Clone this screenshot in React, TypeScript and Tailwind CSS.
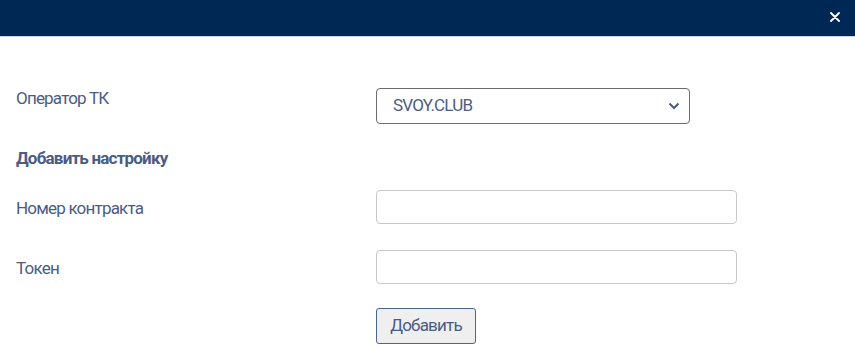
import React from "react";

export default function App() {
  const font = { fontFamily: "Roboto, 'Noto Sans', sans-serif" };
  return (
    <div className="w-[855px] h-[347px] bg-white overflow-hidden" style={font}>
      <div className="h-[37px] bg-[#002855] border-b border-[#d0d4da] flex items-center justify-end pr-[15px]">
        <svg width="10" height="10" viewBox="0 0 10 10" className="mb-[2px]">
          <path d="M1 1 L9 9 M9 1 L1 9" stroke="#ffffff" strokeWidth="1.8" strokeLinecap="round" />
        </svg>
      </div>
      <div className="pl-[16px] pt-[51px] text-[#4a5c85] text-[17px] tracking-[-0.8px]">
        <div className="flex items-center h-[36px]">
          <div className="w-[360px] -mt-[14px]">Оператор ТК</div>
          <div className="w-[314px] h-[36px] border border-[#6b6b6b] rounded-[4px] flex items-center justify-between pl-[16px] pr-[9px]">
            <span>SVOY.CLUB</span>
            <svg width="12" height="8" viewBox="0 0 12 8">
              <path d="M1.5 1.5 L6 6 L10.5 1.5" stroke="#4a5c85" strokeWidth="2" fill="none" />
            </svg>
          </div>
        </div>
        <div className="font-bold mt-[22px] h-[24px] leading-[24px]">Добавить настройку</div>
        <div className="flex items-center h-[34px] mt-[20px]">
          <div className="w-[360px] mt-[3px]">Номер контракта</div>
          <div className="w-[361px] h-[34px] border border-[#c8c8c8] rounded-[4px]" />
        </div>
        <div className="flex items-center h-[34px] mt-[26px]">
          <div className="w-[360px] mt-[3px]">Токен</div>
          <div className="w-[361px] h-[34px] border border-[#c8c8c8] rounded-[4px]" />
        </div>
        <div className="flex mt-[24px]">
          <div className="w-[360px]" />
          <button className="w-[100px] h-[36px] bg-[#efefef] border border-[#4a6491] rounded-[3px] text-[#4a5c85] text-[17px] tracking-[-0.8px] flex items-center justify-center">
            Добавить
          </button>
        </div>
      </div>
    </div>
  );
}
